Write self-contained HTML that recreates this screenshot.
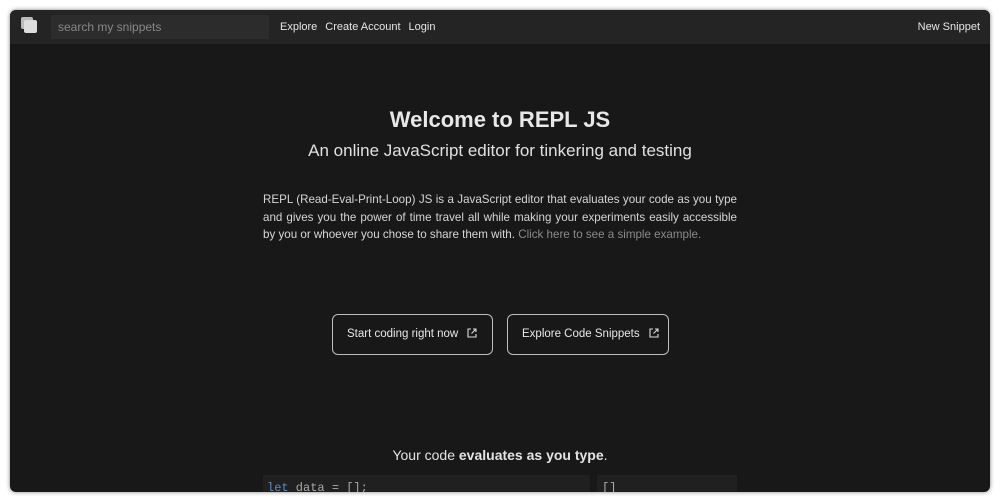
<!DOCTYPE html>
<html><head><meta charset="utf-8"><style>
*{margin:0;padding:0;box-sizing:border-box}
html,body{width:1000px;height:500px;background:#fff;overflow:hidden;font-family:"Liberation Sans",sans-serif}
.win{position:absolute;left:10px;top:10px;width:980px;height:482px;background:#181818;border-radius:6px;overflow:hidden;box-shadow:0 0 4px rgba(0,0,0,.5)}
.nav{height:34px;background:#242424;position:relative;color:#e6e6e6;font-size:11px}
.logo{position:absolute;left:11px;top:7px;width:16px;height:16px}
.search{position:absolute;left:41px;top:5px;width:218px;height:24px;background:#2c2c2c;color:#888;font-size:12px;line-height:24px;padding-left:7px}
.links{position:absolute;left:270px;top:0;line-height:34px}
.links span{margin-right:8px}
.new{position:absolute;right:10px;top:0;line-height:34px}
h1{position:absolute;top:97px;width:100%;text-align:center;color:#e8e8e8;font-size:22px;font-weight:bold}
h2{position:absolute;top:131px;width:100%;text-align:center;color:#e0e0e0;font-size:17px;font-weight:normal}
.d{position:absolute;left:253px;top:181px;width:474px;color:#d6d6d6;font-size:11.6px;line-height:17.5px}
.d div{text-align:justify;text-align-last:justify;white-space:nowrap}
.d div.l{text-align-last:left}
.d a{color:#8a8a8a}
.btn{position:absolute;top:304px;height:41px;border:1px solid #bdbdbd;border-radius:6px;color:#e8e8e8;font-size:11.5px;line-height:39px;padding-left:14px;white-space:nowrap}
.btn svg{display:inline-block;vertical-align:-1px;margin-left:9px}
.ev{position:absolute;top:437px;width:100%;text-align:center;color:#e4e4e4;font-size:14px}
.ed{position:absolute;left:253px;top:465px;width:327px;height:30px;background:#202020;font-family:"Liberation Mono",monospace;font-size:12px;color:#aaa;padding:6px 0 0 4px}
.out{position:absolute;left:587px;top:465px;width:140px;height:30px;background:#202020;font-family:"Liberation Mono",monospace;font-size:12px;color:#aaa;padding:6px 0 0 5px}
</style></head><body>
<div class="win">
 <div class="nav">
  <svg class="logo" viewBox="0 0 16 16"><rect x="0" y="0" width="12" height="12" rx="2" fill="#bbb"/><rect x="3" y="3" width="13" height="13" rx="2" fill="#ddd"/></svg>
  <div class="search">search my snippets</div>
  <div class="links"><span>Explore</span><span>Create Account</span><span>Login</span></div>
  <div class="new">New Snippet</div>
 </div>
 <h1>Welcome to REPL JS</h1>
 <h2>An online JavaScript editor for tinkering and testing</h2>
 <div class="d">
  <div>REPL (Read-Eval-Print-Loop) JS is a JavaScript editor that evaluates your code as you type</div>
  <div>and gives you the power of time travel all while making your experiments easily accessible</div>
  <div class="l">by you or whoever you chose to share them with. <a>Click here to see a simple example.</a></div>
 </div>
 <div class="btn" style="left:322px;width:161px">Start coding right now<svg width="10" height="10" viewBox="0 0 10 10" fill="none" stroke="#ddd" stroke-width="1.1"><path d="M4 1H1v8h8V6M6 1h3v3M9 1L4.5 5.5"/></svg></div>
 <div class="btn" style="left:497px;width:162px">Explore Code Snippets<svg width="10" height="10" viewBox="0 0 10 10" fill="none" stroke="#ddd" stroke-width="1.1"><path d="M4 1H1v8h8V6M6 1h3v3M9 1L4.5 5.5"/></svg></div>
 <div class="ev">Your code <b>evaluates as you type</b>.</div>
 <div class="ed"><span style="color:#5a8fc0">let</span> data = [];</div>
 <div class="out">[]</div>
</div>
</body></html>
